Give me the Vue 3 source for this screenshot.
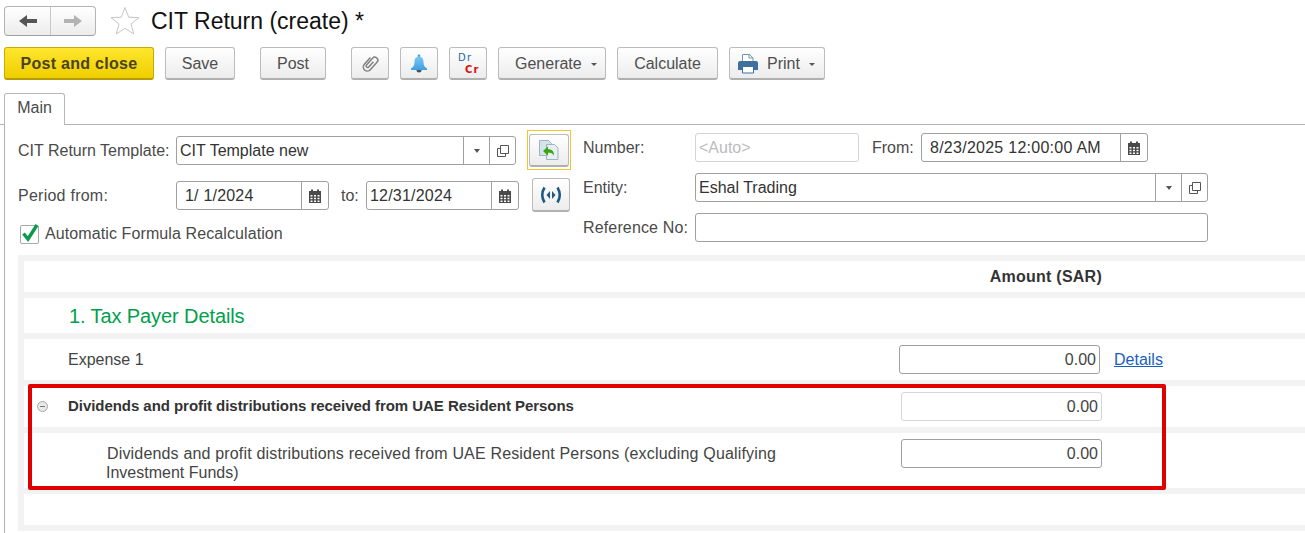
<script setup>
</script>

<template>
  <div class="page">
    <header class="topbar">
      <div class="navgroup">
        <button class="nav nav-l" aria-label="Back">
          <svg width="18" height="12" viewBox="0 0 18 12"><path d="M0 6l8-6v4h10v4H8v4z" fill="#555"/></svg>
        </button>
        <button class="nav" aria-label="Forward">
          <svg width="18" height="12" viewBox="0 0 18 12"><path d="M18 6l-8-6v4H0v4h10v4z" fill="#b3b3b3"/></svg>
        </button>
      </div>
      <svg class="star" width="30" height="30" viewBox="0 0 30 30"><path d="M15 1.500l3.700 9.700 10.300.4-8 6.400 2.800 10L15 22.300l-8.800 5.700 2.800-10-8-6.400 10.300-.4z" fill="#fff" stroke="#c6c6c6"/></svg>
      <h1 class="title">CIT Return (create) *</h1>
    </header>

    <div class="toolbar">
      <button class="btn primary w150">Post and close</button>
      <button class="btn w70 ml11">Save</button>
      <button class="btn w66 ml25">Post</button>
      <button class="btn w38 ml25" aria-label="Attach">
        <svg width="22" height="22" viewBox="0 0 22 22"><path d="M7 6v9a4 4 0 0 0 8 0V5a3 3 0 0 0-6 0v9a1.500 1.500 0 0 0 3 0V7" transform="rotate(42 11 11)" fill="none" stroke="#808080" stroke-width="1.500"/></svg>
      </button>
      <button class="btn w38 ml11" aria-label="Notify">
        <svg width="20" height="20" viewBox="0 0 20 20"><defs><linearGradient id="bellfill" x1="0" y1="0" x2="0" y2="1"><stop offset="0" stop-color="#7cc8f5"/><stop offset="1" stop-color="#3f9ee3"/></linearGradient></defs><rect x="8.800" y="0.500" width="2.400" height="3" rx="1" fill="#4a9bd6"/><path d="M10 2.500c-3 0-4.500 2.300-4.500 5.500 0 3.500-1 4.800-3.500 6.500v1.500h16v-1.500c-2.500-1.700-3.500-3-3.500-6.500 0-3.200-1.500-5.500-4.500-5.500z" fill="url(#bellfill)"/><path d="M7.500 16h5a2.500 2.500 0 0 1-5 0z" fill="#4a4f55"/></svg>
      </button>
      <button class="btn w38 ml11 drcr" aria-label="Debit credit">
        <span class="dr">Dr</span><span class="cr">Cr</span>
      </button>
      <button class="btn w108 ml11 withcaret">Generate<i class="caret"></i></button>
      <button class="btn w101 ml11">Calculate</button>
      <button class="btn w96 ml11 withcaret">
        <svg class="printer" width="20" height="20" viewBox="0 0 20 20"><path d="M4.500 0.500h7l3.500 3.500v5H4.500z" fill="#fff" stroke="#7b93aa"/><path d="M11 0.500V4h4" fill="none" stroke="#7b93aa"/><path d="M2 7h16a2 2 0 0 1 2 2v7h-4v-3H4v3H0V9a2 2 0 0 1 2-2z" fill="#3f6f9f"/><path d="M4.500 12.500h11v6.500h-11z" fill="#fff" stroke="#3f6f9f"/></svg>
        Print<i class="caret"></i>
      </button>
    </div>

    <nav class="tabs"><div class="tab">Main</div></nav>

    <main class="content">
      <section class="form">
        <div class="col-left">
          <div class="row r1">
            <label class="lab lab158">CIT Return Template:</label>
            <div class="field w340">
              <span class="val">CIT Template new</span>
              <span class="cell"><i class="tri"></i></span>
              <span class="cell">
                <svg width="14" height="14" viewBox="0 0 14 14"><path d="M4.500 1.500h8v8h-8zM4.500 4.500h-3v8h8v-3" fill="none" stroke="#555"/></svg>
              </span>
            </div>
            <div class="focus">
              <button class="btn icon40" aria-label="Fill from template">
                <svg width="24" height="24" viewBox="0 0 24 24"><path d="M2.500 2.500h9l3 3v12h-12z" fill="#d5e4ec" stroke="#9fb3bf"/><path d="M9.500 6.500h8l3.500 3.500v11.500H9.500z" fill="#e6eff4" stroke="#9fb3bf"/><path d="M6 13l5-4.500v2.800c4 0 6 2 6 6.500-1.200-2.500-3-3-6-3v3z" fill="#3aa50f"/></svg>
              </button>
            </div>
          </div>
          <div class="row r2">
            <label class="lab lab158 wide">Period from:</label>
            <div class="field w153">
              <span class="val pad date">1/ 1/2024</span>
              <span class="cell cal"><svg width="14" height="14" viewBox="0 0 14 14"><path d="M1 2h12v12H1z" fill="#4a4a4a"/><path d="M3 0.500h2v3H3zM9 0.500h2v3H9z" fill="#4a4a4a"/><path d="M2.500 6h2v1.500h-2zM6 6h2v1.500H6zM9.500 6h2v1.500h-2zM2.500 8.800h2v1.500h-2zM6 8.800h2v1.500H6zM9.500 8.800h2v1.500h-2zM2.500 11.400h2V13h-2zM6 11.400h2V13H6zM9.500 11.400h2V13h-2z" fill="#fff"/></svg></span>
            </div>
            <label class="lab to">to:</label>
            <div class="field w153">
              <span class="val date">12/31/2024</span>
              <span class="cell cal"><svg width="14" height="14" viewBox="0 0 14 14"><path d="M1 2h12v12H1z" fill="#4a4a4a"/><path d="M3 0.500h2v3H3zM9 0.500h2v3H9z" fill="#4a4a4a"/><path d="M2.500 6h2v1.500h-2zM6 6h2v1.500H6zM9.500 6h2v1.500h-2zM2.500 8.800h2v1.500h-2zM6 8.800h2v1.500H6zM9.500 8.800h2v1.500h-2zM2.500 11.400h2V13h-2zM6 11.400h2V13H6zM9.500 11.400h2V13h-2z" fill="#fff"/></svg></span>
            </div>
            <button class="btn icon38" aria-label="Broadcast">
              <svg width="22" height="18" viewBox="0 0 22 18"><path d="M4.500 1.500C1.800 6 1.800 12 4.500 16.500M17.500 1.500c2.700 4.500 2.700 10.500 0 15" fill="none" stroke="#1f5a85" stroke-width="2.600"/><path d="M6.500 9l3.500-4v8zM15.500 9L12 5v8z" fill="#1f5a85"/></svg>
            </button>
          </div>
          <div class="row r3">
            <span class="check">
              <svg width="20" height="20" viewBox="0 0 20 20"><path d="M3.500 10.500l4.500 5.500L17 2" fill="none" stroke="#0b9a4c" stroke-width="3.400"/></svg>
            </span>
            <label class="lab auto-lab">Automatic Formula Recalculation</label>
          </div>
        </div>

        <div class="col-right">
          <div class="row rr1">
            <label class="lab lab112">Number:</label>
            <div class="field w164 disabled"><span class="val auto">&lt;Auto&gt;</span></div>
            <label class="lab from">From:</label>
            <div class="field w227">
              <span class="val pad datetime">8/23/2025 12:00:00 AM</span>
              <span class="cell cal"><svg width="14" height="14" viewBox="0 0 14 14"><path d="M1 2h12v12H1z" fill="#4a4a4a"/><path d="M3 0.500h2v3H3zM9 0.500h2v3H9z" fill="#4a4a4a"/><path d="M2.500 6h2v1.500h-2zM6 6h2v1.500H6zM9.500 6h2v1.500h-2zM2.500 8.800h2v1.500h-2zM6 8.800h2v1.500H6zM9.500 8.800h2v1.500h-2zM2.500 11.400h2V13h-2zM6 11.400h2V13H6zM9.500 11.400h2V13h-2z" fill="#fff"/></svg></span>
            </div>
          </div>
          <div class="row rr2">
            <label class="lab lab112">Entity:</label>
            <div class="field w513">
              <span class="val">Eshal Trading</span>
              <span class="cell"><i class="tri"></i></span>
              <span class="cell">
                <svg width="14" height="14" viewBox="0 0 14 14"><path d="M4.500 1.500h8v8h-8zM4.500 4.500h-3v8h8v-3" fill="none" stroke="#555"/></svg>
              </span>
            </div>
          </div>
          <div class="row rr3">
            <label class="lab lab112 ref-lab">Reference No:</label>
            <div class="field w513"></div>
          </div>
        </div>
      </section>

      <section class="table">
        <div class="tr h31">
          <div class="amount-head">Amount (SAR)</div>
        </div>
        <div class="tr h35"><div class="section-title">1. Tax Payer Details</div></div>
        <div class="tr h41">
          <div class="name">Expense 1</div>
          <div class="field amt first"><span class="num">0.00</span></div>
          <a class="link">Details</a>
        </div>
        <div class="tr h41">
          <span class="minus"></span>
          <div class="name bold">Dividends and profit distributions received from UAE Resident Persons</div>
          <div class="field amt light"><span class="num">0.00</span></div>
        </div>
        <div class="tr h55 top">
          <div class="name child">Dividends and profit distributions received from UAE Resident Persons (excluding Qualifying <span class="tail">Investment Funds)</span></div>
          <div class="field amt"><span class="num">0.00</span></div>
        </div>
        <div class="tr h31"></div>
        <div class="redbox"></div>
      </section>
    </main>
  </div>
</template>

<style>
html, body { margin: 0; background: #fff; overflow: hidden; }
</style>

<style scoped>
.page { width: 1305px; height: 533px; overflow: hidden; font: 16px "Liberation Sans", Arial, sans-serif; color: #4a4a4a; background: #fff; }
button { font: inherit; color: inherit; padding: 0; margin: 0; box-sizing: border-box; }

.topbar { display: flex; align-items: center; height: 30px; padding: 6px 0 0 4px; }
.navgroup { display: flex; width: 92px; height: 30px; box-sizing: border-box; border: 1px solid #b4b4b4; border-bottom-color: #a0a0a0; border-radius: 4px; background: linear-gradient(#fff, #ececec); overflow: hidden; }
.nav { flex: 1; border: 0; background: none; display: flex; align-items: center; justify-content: center; }
.nav-l { border-right: 1px solid #c8c8c8; flex: 0 0 46px; }
.star { margin-left: 14px; }
.title { margin: 0 0 0 11px; font-size: 23px; font-weight: 400; color: #111; line-height: 30px; }

.toolbar { display: flex; margin: 11px 0 0 4px; height: 33px; }
.btn { height: 33px; padding-top: 1px; border: 1px solid #bcbcbc; border-bottom: 2px solid #b0b0b0; border-radius: 3px; background: linear-gradient(#fff, #ececec); color: #4f4f4f; display: flex; align-items: center; justify-content: center; }
.primary { background: linear-gradient(#ffe62e, #f0cf00); border-color: #c9ab00; border-bottom-color: #b79c00; font-weight: 700; color: #4a4224; letter-spacing: .28px; }
.w150 { width: 150px; } .w70 { width: 70px; } .w66 { width: 66px; } .w38 { width: 38px; }
.w108 { width: 108px; } .w101 { width: 101px; } .w96 { width: 96px; }
.ml11 { margin-left: 11px; } .ml25 { margin-left: 25px; }
.drcr { position: relative; font: 10px "DejaVu Sans", sans-serif; letter-spacing: 1.200px; }
.dr { position: absolute; left: 8px; top: 4px; color: #1f66a6; }
.cr { position: absolute; left: 15px; top: 16px; color: #d81010; font-weight: 700; }
.withcaret { justify-content: flex-start; padding-left: 16px; }
.w96.withcaret { padding-left: 9px; }
.printer { margin-right: 9px; margin-left: -1px; }
.caret { width: 0; height: 0; border: 3px solid transparent; border-top: 3px solid #555; border-bottom: 0; margin-left: 9px; margin-top: 2px; }

.tabs { margin: 12px 0 0 0; height: 33px; padding-left: 4px; border-bottom: 1px solid #b3b3b3; box-sizing: border-box; display: flex; align-items: flex-end; }
.tab { width: 61px; height: 32px; box-sizing: border-box; border: 1px solid #b8b8b8; border-bottom: 0; border-radius: 3px 3px 0 0; background: #fff; margin-bottom: -1px; text-align: center; line-height: 28px; position: relative; }

.content { margin-left: 4px; border-left: 1px solid #b3b3b3; height: 408px; padding-left: 13px; box-sizing: border-box; }
.form { display: flex; height: 130px; }
.col-left { width: 565px; }
.row { display: flex; align-items: center; }
.lab { white-space: nowrap; }
.lab158 { width: 158px; }
.lab112 { width: 112px; }
.wide { letter-spacing: .25px; }
.auto-lab { letter-spacing: .1px; }
.ref-lab { letter-spacing: .15px; }
.date { letter-spacing: .2px; }
.datetime { letter-spacing: .26px; }
.field { height: 29px; box-sizing: border-box; border: 1px solid #a0a0a0; border-radius: 3px; display: flex; align-items: center; background: #fff; color: #333; }
.val { flex: 1; padding-left: 3px; white-space: nowrap; }
.val.pad { padding-left: 8px; }
.cell { flex: none; width: 26px; box-sizing: border-box; height: 100%; border-left: 1px solid #a0a0a0; display: flex; align-items: center; justify-content: center; }
.cell.cal { width: 27px; }
.tri { width: 0; height: 0; border: 3px solid transparent; border-top: 4px solid #555; border-bottom: 0; }
.w340 { width: 340px; } .w153 { width: 153px; } .w164 { width: 164px; } .w227 { width: 227px; } .w513 { width: 513px; }
.r1 { height: 40px; margin-top: 5px; }
.r1 > .field, .r1 > .lab { margin-top: 1px; }
.focus { margin-left: 11px; width: 44px; height: 40px; box-sizing: border-box; border: 1px solid #f5c62a; display: flex; align-items: center; justify-content: center; }
.icon40 { width: 40px; height: 33px; border-radius: 3px; }
.r2 { margin-top: 8px; height: 34px; }
.r2 > .field, .r2 > .lab { margin-top: 1px; }
.to { margin-left: 12px; width: 25px; }
.icon38 { width: 38px; height: 34px; margin-left: 13px; }
.r3 { margin-top: 9px; height: 26px; padding-left: 2px; }
.check { width: 19px; height: 19px; box-sizing: border-box; border: 1px solid #a8a8a8; border-radius: 2px; display: flex; margin-right: 6px; overflow: visible; }
.check svg { flex: none; margin: -3px 0 0 -1px; }
.rr1 { margin-top: 8px; }
.rr2 { margin-top: 11px; }
.rr3 { margin-top: 11px; }
.disabled { border-color: #d4d4d4; }
.auto { color: #bbb; }
.from { margin-left: 13px; width: 49px; }

.table { position: relative; background: #f3f3f3; padding: 6px 0 6px 6px; display: flex; flex-direction: column; gap: 6px; }
.tr { background: #fff; display: flex; align-items: center; position: relative; padding-left: 44px; }
.h31 { height: 31px; } .h35 { height: 35px; } .h41 { height: 41px; } .h55 { height: 55px; }
.amount-head { position: absolute; right: 203px; font-weight: 700; color: #333; letter-spacing: .25px; }
.section-title { font-size: 20px; color: #00a04c; padding: 2px 0 0 1px; letter-spacing: -.1px; }
.name { width: 831px; flex: none; color: #444; }
.name.bold { font-weight: 700; font-size: 15px; color: #333; letter-spacing: -.05px; padding-bottom: 2px; }
.name.child { padding: 11px 0 0 39px; width: 680px; margin-right: 114px; line-height: 19px; letter-spacing: .17px; }
.tail { letter-spacing: 0; margin-left: -1px; }
.top { align-items: flex-start; }
.top .amt { margin-top: 6px; margin-left: 0; }
.minus { position: absolute; left: 13px; top: 15px; width: 11px; height: 11px; box-sizing: border-box; border: 1px solid #a8a8a8; border-radius: 50%; background: linear-gradient(#777, #777) center/5px 1px no-repeat, #e8e8e8; }
.amt { width: 201px; justify-content: flex-end; margin-left: 2px; color: #444; }
.amt.first { margin-left: 0; }
.light { border-color: #d6d6d6; }
.num { padding-right: 3px; }
.link { color: #1a5fc0; text-decoration: underline; margin-left: 14px; }
.redbox { position: absolute; left: 10px; top: 129px; width: 1138px; height: 106px; box-sizing: border-box; border: 4px solid #e00000; border-radius: 2px; }
</style>
